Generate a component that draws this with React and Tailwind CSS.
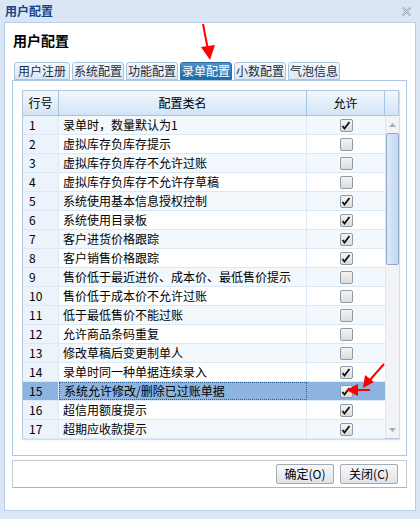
import React from "react";

const rows = [
  ["录单时，数量默认为1", true],
  ["虚拟库存负库存提示", false],
  ["虚拟库存负库存不允许过账", false],
  ["虚拟库存负库存不允许存草稿", false],
  ["系统使用基本信息授权控制", true],
  ["系统使用目录板", true],
  ["客户进货价格跟踪", true],
  ["客户销售价格跟踪", true],
  ["售价低于最近进价、成本价、最低售价提示", false],
  ["售价低于成本价不允许过账", false],
  ["低于最低售价不能过账", false],
  ["允许商品条码重复", false],
  ["修改草稿后变更制单人", false],
  ["录单时同一种单据连续录入", true],
  ["系统允许修改/删除已过账单据", true],
  ["超信用额度提示", true],
  ["超期应收款提示", true],
];

const tabs = ["用户注册", "系统配置", "功能配置", "录单配置", "小数配置", "气泡信息"];

const Checkbox = ({ checked }) => (
  <span className="w-[13px] h-[13px] border border-[#8e9aa8] rounded-[2px] bg-gradient-to-b from-[#f4f4f4] to-[#dcdcdc] flex items-center justify-center">
    {checked && (
      <svg width="10" height="9" viewBox="0 0 10 9">
        <path d="M1.5 5 L3.5 7.5 L8.5 1" fill="none" stroke="#111" strokeWidth="1.8" />
      </svg>
    )}
  </span>
);

export default function App() {
  return (
    <div
      className="w-[420px] h-[519px] bg-[#dbe6f4] relative overflow-hidden text-[12px] text-black"
      style={{ fontFamily: '"Noto Sans CJK SC", "Liberation Sans", sans-serif' }}
    >
      {/* Title bar */}
      <div className="h-[22px] flex items-center justify-between pl-[5px] pr-[8px]">
        <span className="text-[12px] font-bold text-[#15428b] leading-none">用户配置</span>
        <svg width="11" height="11" viewBox="0 0 11 11">
          <path d="M1.5 1.5 L9.5 9.5 M9.5 1.5 L1.5 9.5" stroke="#9aa4ae" strokeWidth="2" />
          <path d="M1.5 1.5 L9.5 9.5 M9.5 1.5 L1.5 9.5" stroke="#e8ecf0" strokeWidth="0.8" />
        </svg>
      </div>

      {/* Window body */}
      <div className="mx-[4px] h-[489px] bg-white border border-[#b8cde8] flex flex-col">
        <div className="pl-[8px] pt-[8px] h-[39px] text-[14px] font-bold leading-[18px]">用户配置</div>

        {/* Tabs */}
        <div className="flex ml-[9px] gap-[2px] h-[18px] items-end">
          {tabs.map((t, i) => {
            const active = t === "录单配置";
            return (
              <div
                key={t}
                className={`h-[18px] ${i === 0 ? "px-[3px]" : "px-[1px]"} flex items-center border rounded-t-[3px] leading-none text-[12px] ${
                  active
                    ? "bg-gradient-to-b from-[#4d93cb] to-[#1c6aa8] border-[#2b6ea8] text-white"
                    : "bg-gradient-to-b from-[#f3f8fd] to-[#d9e7f6] border-[#a9c4e2] text-[#1e2c3c]"
                }`}
              >
                {t}
              </div>
            );
          })}
        </div>

        {/* Tab panel */}
        <div className="ml-[7px] w-[395px] h-[376px] border border-[#a9c8e8] p-[9px]">
          <div className="w-[377px] h-[349px] border border-[#b7c7d9] flex flex-col shadow-[1px_1px_1px_#d6dde6]">
            {/* Header */}
            <div className="h-[25px] flex bg-gradient-to-b from-[#f2f7fd] to-[#d3e4f6] border-b border-[#a7c3e2] shrink-0">
              <div className="w-[36px] border-r border-[#a7c3e2] flex items-center justify-center">行号</div>
              <div className="w-[248px] border-r border-[#a7c3e2] flex items-center justify-center">配置类名</div>
              <div className="w-[78px] border-r border-[#a7c3e2] flex items-center justify-center">允许</div>
              <div className="flex-1" />
            </div>
            <div className="flex flex-1 min-h-0">
              <div className="w-[362px]">
                {rows.map(([name, checked], i) => {
                  const sel = i === 14;
                  const odd = i % 2 === 0;
                  return (
                    <div
                      key={i}
                      className={`h-[19px] flex border-b border-[#dbe8f6] ${
                        sel ? "bg-[#8db4e0]" : odd ? "bg-[#f3f8fd]" : "bg-white"
                      }`}
                    >
                      <div
                        className={`w-[36px] pl-[6px] flex items-center border-r border-[#dbe8f6] ${
                          sel ? "" : "bg-[#ecf3fb]"
                        }`}
                      >
                        {i + 1}
                      </div>
                      <div
                        className={`w-[248px] pl-[4px] flex items-center whitespace-nowrap border-r ${
                          sel ? "border border-dotted border-[#2e5f94]" : "border-[#dbe8f6]"
                        }`}
                      >
                        {name}
                      </div>
                      <div className="w-[78px] flex items-center justify-center">
                        <Checkbox checked={checked} />
                      </div>
                    </div>
                  );
                })}
              </div>
              {/* Scrollbar */}
              <div className="w-[15px] bg-[#f1f3f6] border-l border-[#e2e6ea] flex flex-col items-center">
                <div className="h-[17px] flex items-center justify-center">
                  <svg width="7" height="4" viewBox="0 0 7 4">
                    <path d="M0 4 L3.5 0 L7 4 Z" fill="#a4acb6" />
                  </svg>
                </div>
                <div className="w-[13px] h-[132px] rounded-[2px] border border-[#8fa9cc] bg-gradient-to-r from-[#dce8f7] to-[#c5d9f1]" />
                <div className="flex-1" />
                <div className="h-[17px] flex items-center justify-center">
                  <svg width="7" height="4" viewBox="0 0 7 4">
                    <path d="M0 0 L7 0 L3.5 4 Z" fill="#a4acb6" />
                  </svg>
                </div>
              </div>
            </div>
          </div>
        </div>

        {/* Button bar */}
        <div className="ml-[7px] mt-[4px] w-[395px] h-[28px] border border-[#c8ccd2] border-b-[#b0b4ba] flex items-center justify-end gap-[6px] pr-[8px]">
          {["确定(O)", "关闭(C)"].map((b) => (
            <button
              key={b}
              className="w-[58px] h-[20px] border border-[#a4abb4] rounded-[2px] bg-gradient-to-b from-[#f7f8fa] to-[#dfe3e8] text-[12px] leading-none text-black"
            >
              {b}
            </button>
          ))}
        </div>
      </div>

      {/* Red annotation arrows */}
      <svg className="absolute left-0 top-0 pointer-events-none" width="420" height="519">
        <path d="M203 24 L208 50" stroke="#f00" strokeWidth="2" />
        <path d="M201 47 L210 60 L215 45 Z" fill="#f00" />
        <path d="M384 364 L369 381" stroke="#f00" strokeWidth="2" />
        <path d="M363 388 L365 375 L374 382 Z" fill="#f00" />
        <path d="M370 390 L356 390" stroke="#f00" strokeWidth="2" />
        <path d="M346 390 L358 384 L358 396 Z" fill="#f00" />
      </svg>
    </div>
  );
}
